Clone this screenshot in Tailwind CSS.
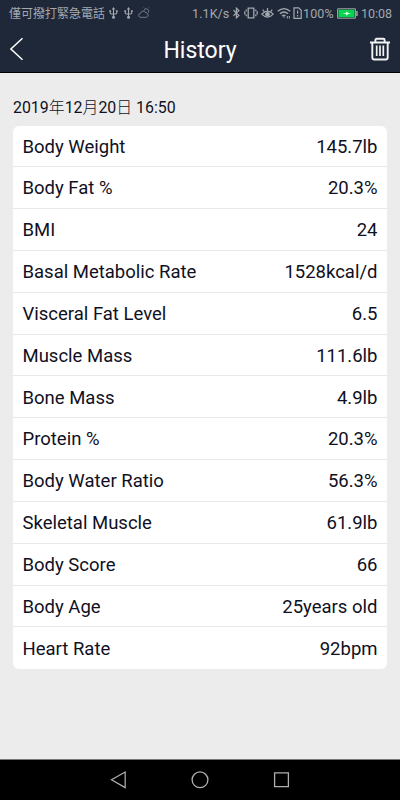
<!DOCTYPE html>
<html lang="zh-Hant">
<head>
    <meta charset="UTF-8">
    <meta name="viewport" content="width=device-width, initial-scale=1.0">
    <title>History</title>
    <script src="https://cdn.jsdelivr.net/npm/@tailwindcss/browser@4"></script>
</head>
<body class="w-[400px] h-[800px] overflow-hidden flex flex-col bg-[#ececec] font-[Roboto,'Noto_Sans_CJK_TC',sans-serif]">

    <!-- 狀態列 + 標題列 -->
    <header class="h-[73px] shrink-0 bg-[#1f2838] border-b border-black">
        <div class="h-[26px] pl-[9px] pr-[8px] flex items-center justify-between text-[#a4a8b0] text-[12px] leading-[26px] whitespace-nowrap">
            <div class="flex items-center">
                <span class="w-[97px] pt-px">僅可撥打緊急電話</span>
                <svg class="w-[9px] h-3 ml-[3px]" viewBox="0 0 9 12" fill="none" stroke="currentColor" stroke-width="1.1">
                    <path d="M4.5 1.5v8M1.2 4v1.8q0 1.2 1.2 1.2h4.2q1.2 0 1.2-1.2V4"/>
                    <path d="M4.5 0L2.8 2.6h3.4zM.3 3.2h1.8v1.6H.3zM6.9 3.2h1.8v1.6H6.9z" fill="currentColor" stroke="none"/>
                    <circle cx="4.5" cy="10.3" r="1.5" fill="currentColor" stroke="none"/>
                </svg>
                <svg class="w-[9px] h-3 ml-[6px]" viewBox="0 0 9 12" fill="none" stroke="currentColor" stroke-width="1.1">
                    <path d="M4.5 1.5v8M1.2 4v1.8q0 1.2 1.2 1.2h4.2q1.2 0 1.2-1.2V4"/>
                    <path d="M4.5 0L2.8 2.6h3.4zM.3 3.2h1.8v1.6H.3zM6.9 3.2h1.8v1.6H6.9z" fill="currentColor" stroke="none"/>
                    <circle cx="4.5" cy="10.3" r="1.5" fill="currentColor" stroke="none"/>
                </svg>
                <svg class="w-3 h-3 ml-[5px] text-[#7d828c]" viewBox="0 0 12 12" fill="none" stroke="currentColor" stroke-width=".9">
                    <path d="M2.8 10.300a2 2 0 0 1-.2-4 2.700 2.700 0 0 1 5.200-.5 2.300 2.300 0 0 1 .7 4.500zM6 3.400a2.400 2.400 0 1 1 4.200 2.200M6.300 1.200l-.5-.6M10.400 1.200l.5-.6"/>
                </svg>
            </div>
            <div class="flex items-center text-[12.5px]">
                <span class="w-[37px] pt-px text-right tracking-[0.1px]">1.1K/s</span>
                <svg class="w-[9px] h-3 ml-[3px]" viewBox="0 0 9 12" fill="none" stroke="currentColor" stroke-width="1.2">
                    <path d="M1.5 3.2l5.4 5.2-2.5 2.4V1.2l2.5 2.4-5.4 5.2"/>
                </svg>
                <svg class="w-[14px] h-3 ml-[3px]" viewBox="0 0 14 12" fill="none" stroke="currentColor" stroke-width="1.3">
                    <path d="M4.200 1.200h5.600v9.600H4.200zM2.200 2.500v1.800M2.200 7.500v1.800M.8 4.300v3.200M11.800 2.500v1.800M11.800 7.500v1.800M13.200 4.300v3.200"/>
                </svg>
                <svg class="w-[13px] h-3 ml-[3px]" viewBox="0 0 13 12" fill="none" stroke="currentColor" stroke-width="1.2">
                    <path d="M.8 7.200q5.700-6 11.400 0-5.700 6-11.400 0zM6.500 3.600V1M3 4.300L1.800 2.600M10 4.300l1.200-1.700"/>
                    <circle cx="6.5" cy="7.200" r="2.300" fill="currentColor" stroke="none"/>
                </svg>
                <svg class="w-[14px] h-3 ml-[3px]" viewBox="0 0 14 12" fill="none" stroke="currentColor" stroke-width="1.3">
                    <path d="M.8 4.300q6.200-5.400 12.400 0M2.900 6.700q4.100-3.400 8.200 0M5 9q2-1.500 3.500-.2"/>
                    <path d="M5.800 9.400h2.400L7 11zM9.800 9h1v2.500h-1zM11.800 9h1v2.500h-1z" fill="currentColor" stroke="none"/>
                </svg>
                <svg class="w-[9px] h-3 ml-[2px]" viewBox="0 0 9 12" fill="none" stroke="currentColor" stroke-width="1.2">
                    <path d="M1 .8h4.700L8.200 3.300v8H1zM4.600 3.400v3.400M4.600 8v1.400"/>
                </svg>
                <span class="w-[31px] ml-[1px] pt-px tracking-[0.1px]">100%</span>
                <svg class="w-[21px] h-[11px] ml-[3px]" viewBox="0 0 21 11">
                    <path d="M.6.8h17.800v9.400H.6z" fill="none" stroke="#a4a8b0" stroke-width="1"/>
                    <path d="M1.500 1.700h16v7.600h-16z" fill="#06d44e"/>
                    <path d="M19.200 3h1.500v5h-1.500z" fill="#a4a8b0"/>
                    <path d="M5 5.500l4-.6.5-1.700 1.500 1.700 3 .7-3.300.7-.8 1.500-1.200-1.700z" fill="#e6ffe9"/>
                </svg>
                <span class="w-[31px] ml-[3px] pt-px">10:08</span>
            </div>
        </div>
        <div class="h-[46px] pl-[9px] pr-[9px] flex items-center justify-between text-white">
            <svg class="w-[22px] h-6" viewBox="0 0 22 24" fill="none" stroke="currentColor" stroke-width="1.5">
                <path d="M13.500 1.300L1.900 12l11.600 10.800"/>
            </svg>
            <h1 class="pt-[3px] text-[23px] leading-[46px]">History</h1>
            <svg class="w-[22px] h-6" viewBox="0 0 22 24" fill="none" stroke="#f2f2f4" stroke-width="1.9">
                <path d="M1 5.500h20M6.400 5.200V3q0-1.200 1.200-1.200h6.800q1.200 0 1.200 1.200v2.200M3.300 6v14.500q0 2 2 2h11.400q2 0 2-2V6"/>
                <path d="M7.700 8.500v10.500M11 8.500v10.500M14.300 8.500v10.500" stroke-width="1.700"/>
            </svg>
        </div>
    </header>

    <main class="flex-1 px-[13px] pt-[23px] text-[#101022]">
        <p class="h-[29.5px] text-[15.9px] leading-[24px]">2019<span class="font-light">年</span>12<span class="font-light">月</span>20<span class="font-light">日</span> 16:50</p>
        <div id="record-list" class="bg-white rounded-md divide-y divide-[#e9e9e9] overflow-hidden"></div>
    </main>

    <!-- 系統導覽列 -->
    <nav class="h-[41px] shrink-0 bg-black border-t border-[#777] pl-[109px] flex items-center gap-[62px] text-[#b0b0b0]">
        <svg class="w-[20px] h-[20px]" viewBox="0 0 20 20" fill="none" stroke="currentColor" stroke-width="1.2"><path d="M16.200 2v15.600L2.500 9.800z"/></svg>
        <svg class="w-[20px] h-[20px]" viewBox="0 0 20 20" fill="none" stroke="currentColor" stroke-width="1.3"><circle cx="9" cy="9.800" r="7.900"/></svg>
        <svg class="w-[20px] h-[20px]" viewBox="0 0 20 20" fill="none" stroke="currentColor" stroke-width="1.3"><path d="M1.600 2.900h13.800v13.800H1.600z"/></svg>
    </nav>

    <script>
        const records = [
            { name: 'Body Weight', value: '145.7lb' },
            { name: 'Body Fat %', value: '20.3%' },
            { name: 'BMI', value: '24' },
            { name: 'Basal Metabolic Rate', value: '1528kcal/d' },
            { name: 'Visceral Fat Level', value: '6.5' },
            { name: 'Muscle Mass', value: '111.6lb' },
            { name: 'Bone Mass', value: '4.9lb' },
            { name: 'Protein %', value: '20.3%' },
            { name: 'Body Water Ratio', value: '56.3%' },
            { name: 'Skeletal Muscle', value: '61.9lb' },
            { name: 'Body Score', value: '66' },
            { name: 'Body Age', value: '25years old' },
            { name: 'Heart Rate', value: '92bpm' }
        ];

        // 產生每一列的量測數據
        document.getElementById('record-list').innerHTML = records.map(r => `
            <div class="h-[41.83px] px-[9.5px] pt-[3px] flex items-center justify-between text-[18.5px]">
                <span>${r.name}</span>
                <span>${r.value}</span>
            </div>
        `).join('');
    </script>
</body>
</html>
